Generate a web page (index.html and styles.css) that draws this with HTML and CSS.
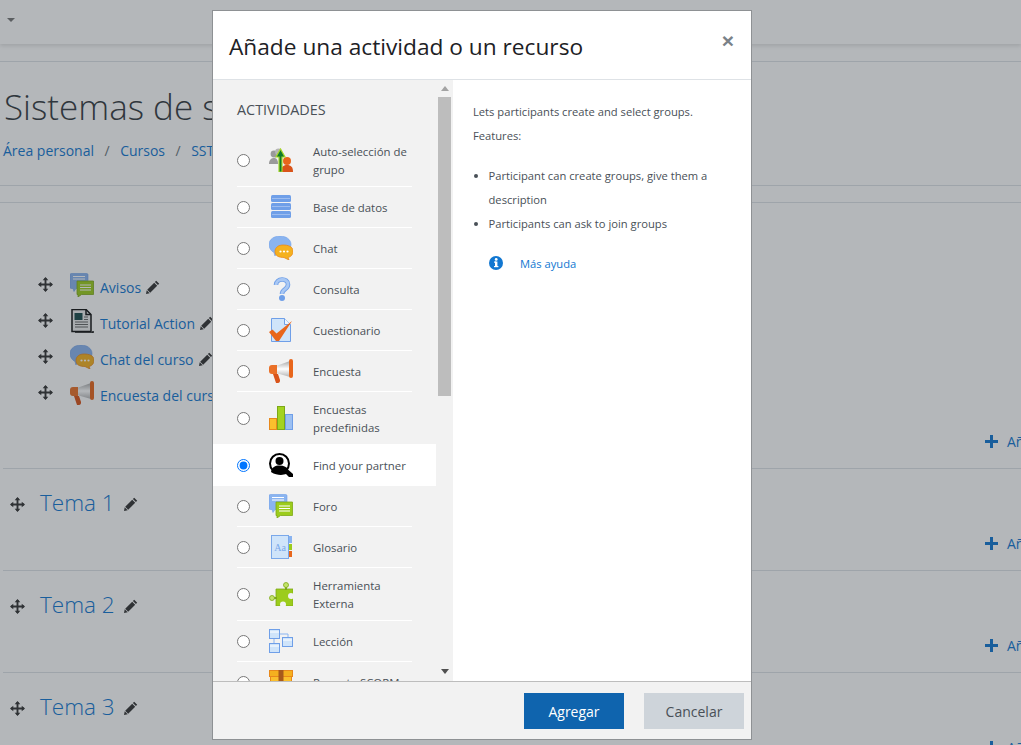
FILE: index.html
```html
<!DOCTYPE html>
<html lang="es">
<head>
    <meta charset="UTF-8">
    <meta name="viewport" content="width=device-width, initial-scale=1.0">
    <title>Añade una actividad o un recurso</title>
    <link rel="stylesheet" href="styles.css">
</head>
<body>

    <svg class="defs" width="0" height="0">
        <linearGradient id="cone" x1="0" y1="0" x2="0" y2="1">
            <stop offset="0" stop-color="#a8a8a8"/>
            <stop offset=".5" stop-color="#fff"/>
            <stop offset="1" stop-color="#b4b4b4"/>
        </linearGradient>
        <symbol id="i-move" viewBox="0 0 16 16">
            <path d="M8 1v14M1 8h14" fill="none" stroke="currentColor" stroke-width="2"/>
            <path d="M8 0l3 3.500H5zM8 16l-3-3.500h6zM0 8l3.500-3v6zM16 8l-3.500 3V5z" fill="currentColor"/>
        </symbol>
        <symbol id="i-pencil" viewBox="0 0 14 14">
            <path d="M10.200 .8l3 3-1.300 1.300-3-3zM8.200 2.800l3 3-7 7-3-3zM.7 10.300l3 3-3.700.7z" fill="currentColor"/>
        </symbol>
        <symbol id="i-group" viewBox="0 0 24 24">
            <circle cx="5" cy="6" r="3.400" fill="#9a9a9a"/><path d="M0 16c0-5 3-6 5-6s4 1 4 6z" fill="#9a9a9a"/>
            <circle cx="9.500" cy="4" r="3.400" fill="#b5b5b5"/>
            <circle cx="18" cy="13" r="4" fill="#e8661c"/><path d="M12 24c0-5 2-7 6-7s6 2 6 7z" fill="#d9541a"/>
            <path d="M10 24V9H7l4.500-8 4.500 8h-3v15z" fill="#0f7a2c" stroke="#a6d52a" stroke-width="1.200"/>
        </symbol>
        <symbol id="i-data" viewBox="0 0 24 24">
            <rect x="2" y="0" width="20" height="7" rx="1.500" fill="#6f9fe8"/><rect x="3" y="3" width="18" height="1" fill="#9dbdf0"/>
            <rect x="2" y="8" width="20" height="7" rx="1.500" fill="#6f9fe8"/><rect x="3" y="11" width="18" height="1" fill="#9dbdf0"/>
            <rect x="2" y="16" width="20" height="7" rx="1.500" fill="#6f9fe8"/><rect x="3" y="19" width="18" height="1" fill="#9dbdf0"/>
        </symbol>
        <symbol id="i-chat" viewBox="0 0 24 24">
            <path d="M11 0c6 0 11 3.500 11 8.500S17 17 11 17l-4 1-1 2-1-3.500C2 15 0 12 0 8.500 0 3.500 5 0 11 0z" fill="#8ab4f0" stroke="#6f9fe8" stroke-width=".6"/>
            <path d="M14 9c5 0 10 1.500 10 6s-3 6-5 6.500l1 2.500-5-2.500c-5 0-9-1.500-9-6s4-6.500 8-6.500z" fill="#f5b11f" stroke="#e8891c" stroke-width=".8"/>
            <circle cx="11.500" cy="15.500" r="1.100" fill="#fff"/><circle cx="15" cy="15.500" r="1.100" fill="#fff"/><circle cx="18.500" cy="15.500" r="1.100" fill="#fff"/>
        </symbol>
        <symbol id="i-question" viewBox="0 0 24 24">
            <path d="M7 8c0-7 12-7.500 12-.5 0 5-6 4.500-6 9.500" fill="none" stroke="#6f9fe8" stroke-width="4.600"/>
            <path d="M7 8c0-7 12-7.500 12-.5 0 5-6 4.500-6 9.500" fill="none" stroke="#a9c8f4" stroke-width="2.800"/>
            <circle cx="13" cy="21" r="3" fill="#6f9fe8"/>
        </symbol>
        <symbol id="i-quiz" viewBox="0 0 24 24">
            <path d="M2.500 .5h13l6 6v17h-19z" fill="#cfe4fa" stroke="#6f9fe8"/>
            <path d="M15.500 .5v6h6" fill="#eef6fe" stroke="#6f9fe8"/>
            <path d="M0 14l3.500-2.500 4 4L23 3 10 23H7z" fill="#e8661c"/>
        </symbol>
        <symbol id="i-survey" viewBox="0 0 24 24">
            <path d="M7 7l14-5v16L7 14z" fill="url(#cone)"/>
            <path d="M0 9c0-2 1-3 3-3h5v9H3C1 15 0 14 0 12z" fill="#ea7028"/>
            <path d="M4 15h5l2 6c.3 1.500-.5 3-2 3H7z" fill="#d9541a"/>
            <rect x="20" y="0" width="4" height="19" rx="2" fill="#e8661c"/>
        </symbol>
        <symbol id="i-bars" viewBox="0 0 24 24">
            <rect x=".5" y="12.500" width="7" height="11" fill="#fbc02d" stroke="#e8891c"/>
            <rect x="8.500" y=".5" width="7" height="23" fill="#a3d321" stroke="#7da817"/>
            <rect x="16.500" y="8.500" width="7" height="15" fill="#9cc0f2" stroke="#6f9fe8"/>
        </symbol>
        <symbol id="i-partner" viewBox="0 0 24 24">
            <circle cx="10.500" cy="10.500" r="9.500" fill="#fff" stroke="#000" stroke-width="2"/>
            <circle cx="10.500" cy="8" r="4" fill="#000"/>
            <path d="M2 19c1-5 4-6.500 8.500-6.500S18 14 19.500 17l4.500 4v3h-4l-3-3c-2 1-9 2-15-2z" fill="#000"/>
        </symbol>
        <symbol id="i-forum" viewBox="0 0 24 24">
            <path d="M1.500 .5h15c1 0 1.500 .5 1.500 1.500v12c0 1-.5 1.500-1.500 1.500H6l-2 3-1-3H1.500C.5 15.500 0 15 0 14V2C0 1 .5 .5 1.500 .5z" fill="#8ab4f0" stroke="#6f9fe8" stroke-width=".6"/>
            <path d="M3 3.500h12M3 6h12" stroke="#fff"/>
            <path d="M7 8h16.500v13.500H11.500L8 24v-2.500H7z" fill="#9ccc1c" stroke="#7da817" stroke-width=".8"/>
            <path d="M10 12h11M10 14.500h11M10 17h11" stroke="#fff"/>
        </symbol>
        <symbol id="i-tool" viewBox="0 0 24 24">
            <path d="M7 7h17v17H7z" fill="#9ccc1c" stroke="#7da817" stroke-width=".8"/>
            <path d="M17 3v5M3 16h5" stroke="#7da817" stroke-width="2"/>
            <circle cx="17" cy="3" r="2.500" fill="#c2e36b" stroke="#7da817" stroke-width=".8"/>
            <circle cx="3" cy="16" r="2.500" fill="#c2e36b" stroke="#7da817" stroke-width=".8"/>
            <circle cx="22" cy="14" r="3" fill="#f2f2f2"/>
            <circle cx="14" cy="22.500" r="3" fill="#f2f2f2"/>
        </symbol>
        <symbol id="i-lesson" viewBox="0 0 24 24">
            <path d="M10 5h9v4M5 10v5" fill="none" stroke="#8ab4f0"/>
            <rect x=".5" y=".5" width="10" height="9" fill="#cfe4fa" stroke="#6f9fe8"/><path d="M1 3h9" stroke="#fff"/>
            <rect x="13.500" y="8.500" width="10" height="9" fill="#cfe4fa" stroke="#6f9fe8"/><path d="M14 11h9" stroke="#fff"/>
            <rect x=".5" y="14.500" width="10" height="9" fill="#cfe4fa" stroke="#6f9fe8"/><path d="M1 17h9" stroke="#fff"/>
        </symbol>
        <symbol id="i-scorm" viewBox="0 0 24 24">
            <rect x=".5" y=".5" width="23" height="6" fill="#f5b11f" stroke="#e8891c"/>
            <rect x="1.500" y="6.500" width="21" height="17" fill="#fbc02d" stroke="#e8891c"/>
            <rect x="9.500" y="0" width="5" height="24" fill="#a85a1c"/>
        </symbol>
        <symbol id="i-doc" viewBox="0 0 24 24">
            <path d="M2 .5h14l5 5v17H2z" fill="#eee" stroke="#111" stroke-width="1.500"/>
            <path d="M16 .5v5h5M23 22v2H5" fill="none" stroke="#111" stroke-width="1.500"/>
            <rect x="4.500" y="4" width="8" height="7" fill="#1a4a4a"/>
            <path d="M5 13h13M5 15.500h13M5 18h13M14 8h4M14 10.500h4" stroke="#666"/>
        </symbol>
    </svg>

    <div class="page">
        <div class="topbar"><span class="caret"></span></div>
        <div class="rule-top"></div>
        <h1 class="course-title">Sistemas de sistemas</h1>
        <nav class="crumbs">
            <a>Área personal</a><span>/</span><a>Cursos</a><span>/</span><a>SST</a>
        </nav>
        <div class="crumb-rules"></div>

        <ul class="intro">
            <li><svg class="move"><use href="#i-move"/></svg><svg class="mod"><use href="#i-forum"/></svg><a>Avisos</a><svg class="pen"><use href="#i-pencil"/></svg></li>
            <li><svg class="move"><use href="#i-move"/></svg><svg class="mod"><use href="#i-doc"/></svg><a>Tutorial Action</a><svg class="pen"><use href="#i-pencil"/></svg></li>
            <li><svg class="move"><use href="#i-move"/></svg><svg class="mod"><use href="#i-chat"/></svg><a>Chat del curso</a><svg class="pen"><use href="#i-pencil"/></svg></li>
            <li><svg class="move"><use href="#i-move"/></svg><svg class="mod"><use href="#i-survey"/></svg><a>Encuesta del curso</a><svg class="pen"><use href="#i-pencil"/></svg></li>
        </ul>
        <div class="add-link"><span class="plus"></span><a>Añadir</a></div>

        <section class="tema">
            <div class="tema-head"><svg class="move"><use href="#i-move"/></svg><a>Tema 1</a><svg class="pen"><use href="#i-pencil"/></svg></div>
            <div class="add-link"><span class="plus"></span><a>Añadir</a></div>
        </section>
        <section class="tema">
            <div class="tema-head"><svg class="move"><use href="#i-move"/></svg><a>Tema 2</a><svg class="pen"><use href="#i-pencil"/></svg></div>
            <div class="add-link"><span class="plus"></span><a>Añadir</a></div>
        </section>
        <section class="tema">
            <div class="tema-head"><svg class="move"><use href="#i-move"/></svg><a>Tema 3</a><svg class="pen"><use href="#i-pencil"/></svg></div>
            <div class="add-link"><span class="plus"></span><a>Añadir</a></div>
        </section>
    </div>

    <div class="backdrop"></div>

    <div class="modal">
        <header class="modal-head">
            <h2>Añade una actividad o un recurso</h2>
            <button class="close">×</button>
        </header>

        <div class="modal-body">
            <div class="chooser">
                <div class="options">
                    <div class="options-title">ACTIVIDADES</div>
                    <label class="option"><span class="option-in"><input type="radio" name="mod"><svg class="mod"><use href="#i-group"/></svg><span>Auto-selección de grupo</span></span></label>
                    <label class="option"><span class="option-in"><input type="radio" name="mod"><svg class="mod"><use href="#i-data"/></svg><span>Base de datos</span></span></label>
                    <label class="option"><span class="option-in"><input type="radio" name="mod"><svg class="mod"><use href="#i-chat"/></svg><span>Chat</span></span></label>
                    <label class="option"><span class="option-in"><input type="radio" name="mod"><svg class="mod"><use href="#i-question"/></svg><span>Consulta</span></span></label>
                    <label class="option"><span class="option-in"><input type="radio" name="mod"><svg class="mod"><use href="#i-quiz"/></svg><span>Cuestionario</span></span></label>
                    <label class="option"><span class="option-in"><input type="radio" name="mod"><svg class="mod"><use href="#i-survey"/></svg><span>Encuesta</span></span></label>
                    <label class="option"><span class="option-in"><input type="radio" name="mod"><svg class="mod"><use href="#i-bars"/></svg><span>Encuestas predefinidas</span></span></label>
                    <label class="option selected"><span class="option-in"><input type="radio" name="mod" checked><svg class="mod"><use href="#i-partner"/></svg><span>Find your partner</span></span></label>
                    <label class="option"><span class="option-in"><input type="radio" name="mod"><svg class="mod"><use href="#i-forum"/></svg><span>Foro</span></span></label>
                    <label class="option"><span class="option-in"><input type="radio" name="mod"><svg class="mod" viewBox="0 0 24 24">
                        <rect x="15" y="1" width="8" height="7" fill="#8ab4f0"/><rect x="17" y="9" width="6" height="6" fill="#9ccc1c"/><rect x="19" y="16" width="4" height="6" fill="#e8661c"/>
                        <rect x="2.500" y=".5" width="17" height="23" fill="#cfe4fa" stroke="#7aa8ea"/>
                        <text x="11" y="16" text-anchor="middle" class="icon-text">Aa</text>
                    </svg><span>Glosario</span></span></label>
                    <label class="option"><span class="option-in"><input type="radio" name="mod"><svg class="mod"><use href="#i-tool"/></svg><span>Herramienta Externa</span></span></label>
                    <label class="option"><span class="option-in"><input type="radio" name="mod"><svg class="mod"><use href="#i-lesson"/></svg><span>Lección</span></span></label>
                    <label class="option"><span class="option-in"><input type="radio" name="mod"><svg class="mod"><use href="#i-scorm"/></svg><span>Paquete SCORM</span></span></label>
                </div>
                <div class="scrollbar">
                    <span class="arrow-up"></span>
                    <span class="thumb"></span>
                    <span class="arrow-down"></span>
                </div>
            </div>

            <div class="help">
                <p>Lets participants create and select groups.</p>
                <p class="features">Features:</p>
                <ul>
                    <li>Participant can create groups, give them a description</li>
                    <li>Participants can ask to join groups</li>
                </ul>
                <a class="more">
                    <svg class="info" viewBox="0 0 14 14">
                        <circle cx="7" cy="7" r="7" fill="#1177d1"/>
                        <rect x="6" y="5.500" width="2.400" height="5.500" fill="#fff"/>
                        <rect x="5" y="5.500" width="2" height="1.200" fill="#fff"/>
                        <rect x="5" y="10" width="4.400" height="1.200" fill="#fff"/>
                        <circle cx="7.200" cy="3.400" r="1.400" fill="#fff"/>
                    </svg>
                    <span>Más ayuda</span>
                </a>
            </div>
        </div>

        <footer class="modal-foot">
            <button class="btn btn-primary">Agregar</button>
            <button class="btn btn-cancel">Cancelar</button>
        </footer>
    </div>

</body>
</html>
```

FILE: styles.css
```css
* {
    box-sizing: border-box;
}

html, body {
    height: 745px;
    overflow: hidden;
}

body {
    margin: 0;
    font-family: "Open Sans", "Noto Sans", sans-serif;
    background: #fff;
    color: #495057;
}

a {
    color: #1177d1;
}

.defs {
    position: absolute;
}

.icon-text {
    font-family: "Liberation Serif", serif;
    font-size: 10px;
    fill: #7aa8ea;
}

/* pagina de fondo */
.topbar {
    height: 44px;
    padding: 18px 0 0 7px;
    box-shadow: 0 2px 4px rgba(0, 0, 0, 0.12);
}

.caret {
    display: block;
    width: 0;
    border: 4px solid transparent;
    border-top-color: #777;
    border-bottom: 0;
}

.rule-top {
    height: 1px;
    margin-top: 17px;
    background: #dee2e6;
}

.course-title {
    margin: 20px 0 0 4px;
    height: 50px;
    font-size: 35px;
    line-height: 50px;
    font-weight: 300;
    white-space: nowrap;
    color: #343a40;
}

.crumbs {
    display: flex;
    height: 20px;
    margin-top: 9px;
    padding-left: 3px;
    font-size: 14px;
    line-height: 20px;
}

.crumbs span {
    margin: 0 10.500px;
    color: #6c757d;
}

.crumb-rules {
    height: 18px;
    margin-top: 24px;
    border-top: 1px solid #dee2e6;
    border-bottom: 1px solid #dee2e6;
}

.intro {
    height: 228px;
    margin: 0;
    padding: 66px 0 0 38px;
    list-style: none;
    font-size: 14px;
}

.intro li {
    display: flex;
    align-items: center;
    height: 36px;
    white-space: nowrap;
}

.intro .move {
    margin: -6px 17px 0 0;
}

.intro .mod {
    margin: -5px 6px 0 0;
}

.intro .pen {
    margin-left: 5px;
}

.move {
    flex: none;
    width: 15px;
    height: 15px;
    color: #333;
}

.mod {
    flex: none;
    width: 24px;
    height: 24px;
}

.pen {
    flex: none;
    width: 14px;
    height: 14px;
    color: #333;
}

.add-link {
    display: flex;
    align-items: center;
    height: 20px;
    gap: 9px;
    font-size: 14px;
    white-space: nowrap;
    overflow: hidden;
}

.plus {
    flex: none;
    width: 13px;
    height: 13px;
    background:
        linear-gradient(#1177d1, #1177d1) center / 13px 3px no-repeat,
        linear-gradient(#1177d1, #1177d1) center / 3px 13px no-repeat;
}

.page > .add-link {
    margin-bottom: 17px;
    padding-left: 985px;
}

.tema {
    height: 102px;
    margin-left: 3px;
    border-top: 1px solid #dee2e6;
}

.tema-head {
    display: flex;
    align-items: center;
    height: 34px;
    margin-top: 16px;
    padding-left: 7px;
    font-size: 22.500px;
    font-weight: 300;
}

.tema-head .move {
    margin-right: 15px;
    margin-top: 4px;
}

.tema-head .pen {
    margin: 4px 0 0 9px;
}

.tema .add-link {
    margin-top: 14px;
    padding-left: 982px;
}

/* ventana modal */
.backdrop {
    position: fixed;
    inset: 0;
    background: rgba(41, 49, 57, 0.35);
}

.modal {
    position: fixed;
    top: 10px;
    left: 212px;
    display: flex;
    flex-direction: column;
    width: 540px;
    height: 730px;
    background: #fff;
    border: 1px solid #8e9194;
}

.modal-head {
    display: flex;
    justify-content: space-between;
    height: 69px;
    padding: 0 17px 0 16px;
    border-bottom: 1px solid #dee2e6;
}

.modal-head h2 {
    margin: 0;
    font-size: 22.700px;
    line-height: 71px;
    font-weight: 400;
    color: #1d2125;
}

.close {
    height: 24px;
    margin-top: 18px;
    padding: 0;
    border: none;
    background: none;
    font-family: "Liberation Sans", sans-serif;
    font-size: 21px;
    line-height: 24px;
    font-weight: 700;
    color: #7a8288;
}

.modal-body {
    display: flex;
    flex: 1;
    min-height: 0;
}

.chooser {
    display: flex;
    flex: none;
    width: 240px;
    background: #f2f2f2;
}

.options {
    width: 223px;
    overflow: hidden;
    font-size: 11.400px;
    line-height: 18px;
}

.options-title {
    margin: 20px 0 14px 24px;
    font-size: 14.400px;
    line-height: 20px;
}

.option {
    display: block;
    padding: 0 24px;
}

.option-in {
    display: flex;
    align-items: center;
    min-height: 41px;
    padding: 7px 0;
    border-bottom: 1px solid #fff;
}

.option-in > span {
    margin-top: 2px;
}

.option-in input {
    flex: none;
    width: 13px;
    height: 13px;
    margin: 0 19px 0 0;
}

.option-in .mod {
    margin-right: 20px;
}

.selected {
    margin-top: -1px;
    padding-top: 1px;
    background: #fff;
}

.scrollbar {
    display: flex;
    flex-direction: column;
    align-items: center;
    width: 15px;
    margin-left: 1px;
    padding-top: 6px;
}

.arrow-up {
    flex: none;
    width: 0;
    border: 4px solid transparent;
    border-bottom: 5px solid #a3a3a3;
    border-top: 0;
}

.thumb {
    flex: none;
    width: 13px;
    height: 299px;
    margin-top: 6px;
    background: #bdbdbd;
}

.arrow-down {
    flex: none;
    width: 0;
    margin-top: 273px;
    border: 4px solid transparent;
    border-top: 5px solid #505050;
    border-bottom: 0;
}

.help {
    flex: 1;
    padding: 20px 20px 0;
    font-size: 11.200px;
    line-height: 24px;
}

.help p {
    margin: 0;
}

.help ul {
    margin: 16px 0 0;
    padding-left: 15.500px;
}

.more {
    display: flex;
    align-items: center;
    gap: 17px;
    margin: 16px 0 0 16px;
}

.info {
    width: 14px;
    height: 14px;
    margin-top: -3px;
}

.modal-foot {
    display: flex;
    justify-content: flex-end;
    gap: 20px;
    height: 58px;
    padding: 11px 7px 0 0;
    background: #f2f2f2;
    border-top: 1px solid #bdbdbd;
}

.btn {
    width: 100px;
    height: 36px;
    border: none;
    font-family: inherit;
    font-size: 14px;
}

.btn-primary {
    background: #0f64ae;
    color: #fff;
}

.btn-cancel {
    background: #ced4da;
    color: #495057;
}
```
